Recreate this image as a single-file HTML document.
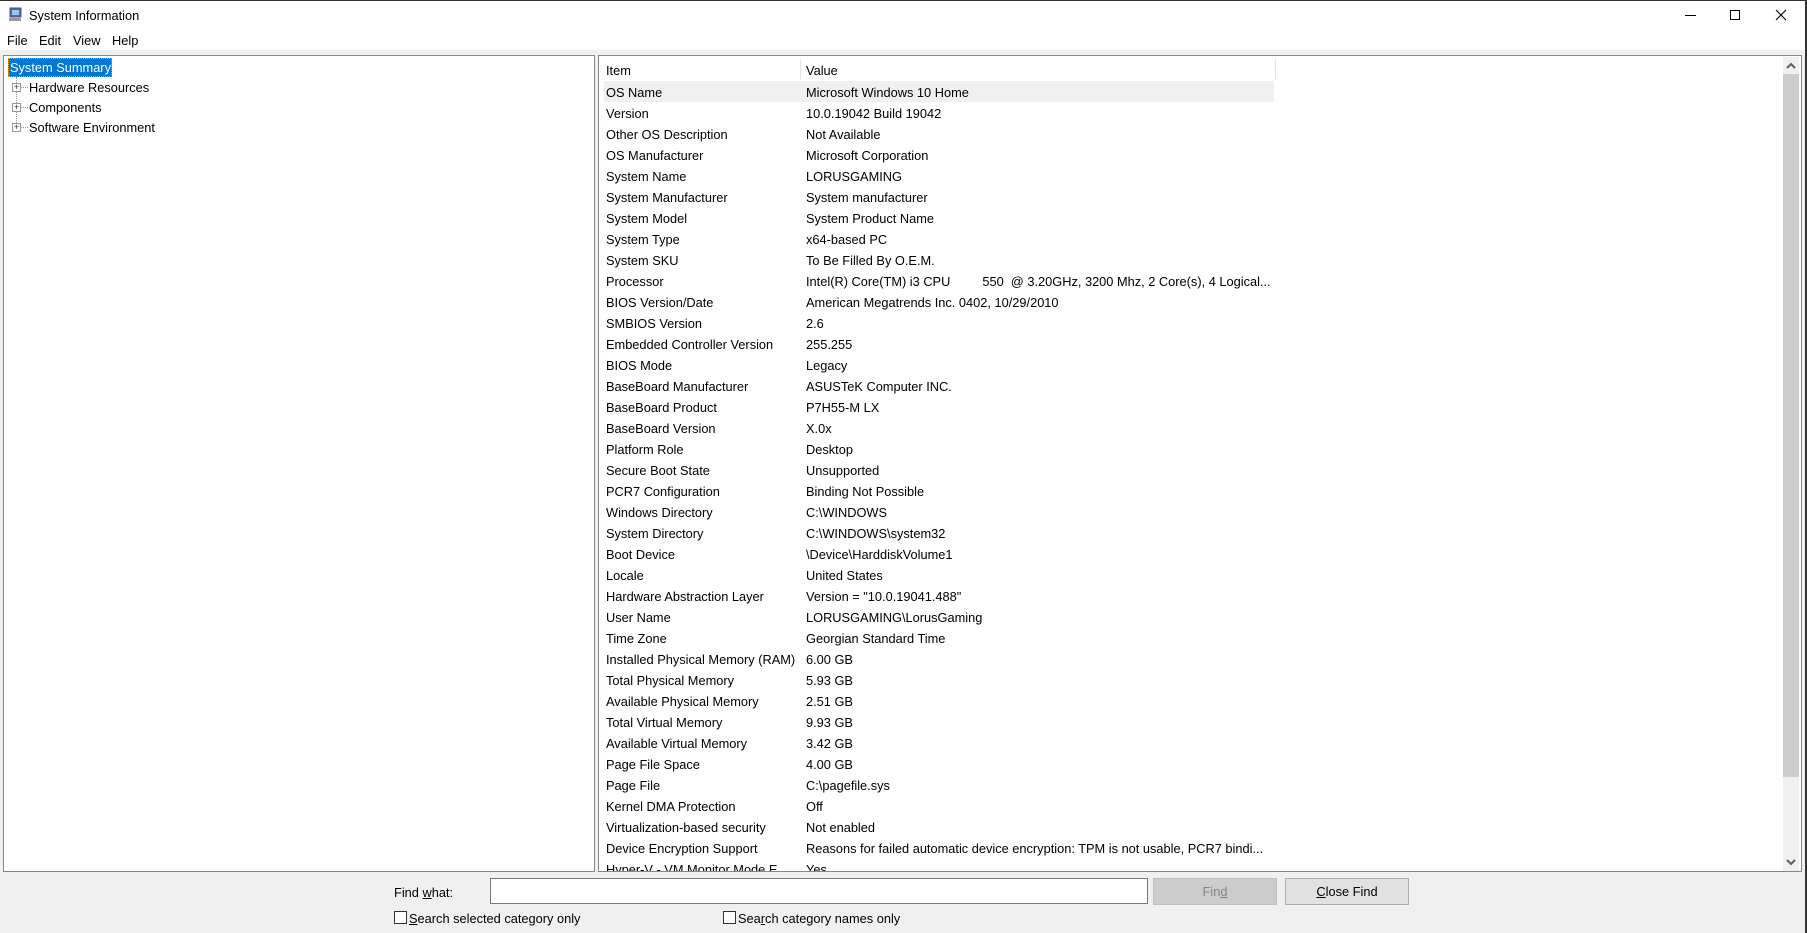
<!DOCTYPE html>
<html><head><meta charset="utf-8"><style>
*{margin:0;padding:0;box-sizing:border-box}
body{width:1807px;height:933px;background:#fff;font-family:"Liberation Sans",sans-serif;font-size:12.8px;color:#000;position:relative;overflow:hidden}
.a{position:absolute;white-space:nowrap}
.row{position:absolute;left:604px;height:21px;width:670px}
.row span{position:absolute;top:4px}
.row .k{left:2px}.row .v{left:202px}
</style></head><body>
<div class="a" style="left:0;top:0;width:1807px;height:1px;background:#333"></div>
<div class="a" style="left:1805px;top:0;width:2px;height:933px;background:#333"></div>
<svg class="a" style="left:8px;top:7px" width="16" height="16" viewBox="0 0 16 16"><rect x="2" y="1" width="11" height="9" fill="#3a6fc4" stroke="#556" stroke-width="1"/><rect x="4" y="3" width="7" height="5" fill="#9cc3ee"/><rect x="1" y="11" width="12" height="3" fill="#999"/></svg>
<div class="a" style="left:29px;top:8px">System Information</div>
<div class="a" style="left:1685px;top:15px;width:11px;height:1px;background:#000"></div>
<div class="a" style="left:1730px;top:10px;width:10px;height:10px;border:1px solid #000"></div>
<svg class="a" style="left:1775px;top:9px" width="12" height="12"><path d="M1 1L11 11M11 1L1 11" stroke="#000" stroke-width="1.1"/></svg>
<div class="a" style="left:7px;top:33px">File</div>
<div class="a" style="left:39px;top:33px">Edit</div>
<div class="a" style="left:73px;top:33px">View</div>
<div class="a" style="left:112px;top:33px">Help</div>
<div class="a" style="left:0;top:50px;width:1805px;height:883px;background:#f0f0f0"></div>
<div class="a" style="left:3px;top:55px;width:592px;height:817px;background:#fff;border:1px solid #828790"></div>
<div class="a" style="left:8px;top:58px;width:104px;height:19px;background:#0078d7;border:1px dotted #f0a020"></div>
<div class="a" style="left:10px;top:60px;color:#fff">System Summary</div>
<div class="a" style="left:16px;top:77px;height:52px;border-left:1px dotted #999"></div>
<div class="a" style="left:20px;top:87px;width:8px;border-top:1px dotted #999"></div>
<div class="a" style="left:20px;top:107px;width:8px;border-top:1px dotted #999"></div>
<div class="a" style="left:20px;top:127px;width:8px;border-top:1px dotted #999"></div>
<div class="a" style="left:12px;top:83px;width:9px;height:9px;border:1px solid #999;background:#fff;font-size:9px;line-height:7px;text-align:center;color:#333">+</div>
<div class="a" style="left:12px;top:103px;width:9px;height:9px;border:1px solid #999;background:#fff;font-size:9px;line-height:7px;text-align:center;color:#333">+</div>
<div class="a" style="left:12px;top:123px;width:9px;height:9px;border:1px solid #999;background:#fff;font-size:9px;line-height:7px;text-align:center;color:#333">+</div>
<div class="a" style="left:29px;top:80px">Hardware Resources</div>
<div class="a" style="left:29px;top:100px">Components</div>
<div class="a" style="left:29px;top:120px">Software Environment</div>
<div class="a" style="left:598px;top:55px;width:1204px;height:817px;background:#fff;border:1px solid #828790;overflow:hidden">
<div class="a" style="left:201px;top:3px;width:1px;height:20px;background:#e5e5e5"></div>
<div class="a" style="left:676px;top:3px;width:1px;height:20px;background:#e5e5e5"></div>
<div class="a" style="left:7px;top:7px">Item</div>
<div class="a" style="left:207px;top:7px">Value</div>
</div>
<div class="a" style="left:1783px;top:57px;width:16px;height:814px;background:#f0f0f0"></div>
<div class="a" style="left:1783px;top:74px;width:16px;height:703px;background:#cdcdcd"></div>
<svg class="a" style="left:1786px;top:62px" width="10" height="8"><path d="M1 6L5 2L9 6" stroke="#606060" stroke-width="2" fill="none"/></svg>
<svg class="a" style="left:1786px;top:858px" width="10" height="8"><path d="M1 2L5 6L9 2" stroke="#606060" stroke-width="2" fill="none"/></svg>
<div class="a" style="left:604px;top:81px;width:670px;height:21px;background:#f0f0f0"></div>
<div class="a" style="left:599px;top:56px;width:1183px;height:815px;overflow:hidden">
<div style="position:absolute;left:-599px;top:-56px;width:1300px;height:900px">
<div class="row" style="top:81px"><span class="k">OS Name</span><span class="v">Microsoft Windows 10 Home</span></div>
<div class="row" style="top:102px"><span class="k">Version</span><span class="v">10.0.19042 Build 19042</span></div>
<div class="row" style="top:123px"><span class="k">Other OS Description</span><span class="v">Not Available</span></div>
<div class="row" style="top:144px"><span class="k">OS Manufacturer</span><span class="v">Microsoft Corporation</span></div>
<div class="row" style="top:165px"><span class="k">System Name</span><span class="v">LORUSGAMING</span></div>
<div class="row" style="top:186px"><span class="k">System Manufacturer</span><span class="v">System manufacturer</span></div>
<div class="row" style="top:207px"><span class="k">System Model</span><span class="v">System Product Name</span></div>
<div class="row" style="top:228px"><span class="k">System Type</span><span class="v">x64-based PC</span></div>
<div class="row" style="top:249px"><span class="k">System SKU</span><span class="v">To Be Filled By O.E.M.</span></div>
<div class="row" style="top:270px"><span class="k">Processor</span><span class="v" style="white-space:pre">Intel(R) Core(TM) i3 CPU         550  @ 3.20GHz, 3200 Mhz, 2 Core(s), 4 Logical...</span></div>
<div class="row" style="top:291px"><span class="k">BIOS Version/Date</span><span class="v">American Megatrends Inc. 0402, 10/29/2010</span></div>
<div class="row" style="top:312px"><span class="k">SMBIOS Version</span><span class="v">2.6</span></div>
<div class="row" style="top:333px"><span class="k">Embedded Controller Version</span><span class="v">255.255</span></div>
<div class="row" style="top:354px"><span class="k">BIOS Mode</span><span class="v">Legacy</span></div>
<div class="row" style="top:375px"><span class="k">BaseBoard Manufacturer</span><span class="v">ASUSTeK Computer INC.</span></div>
<div class="row" style="top:396px"><span class="k">BaseBoard Product</span><span class="v">P7H55-M LX</span></div>
<div class="row" style="top:417px"><span class="k">BaseBoard Version</span><span class="v">X.0x</span></div>
<div class="row" style="top:438px"><span class="k">Platform Role</span><span class="v">Desktop</span></div>
<div class="row" style="top:459px"><span class="k">Secure Boot State</span><span class="v">Unsupported</span></div>
<div class="row" style="top:480px"><span class="k">PCR7 Configuration</span><span class="v">Binding Not Possible</span></div>
<div class="row" style="top:501px"><span class="k">Windows Directory</span><span class="v">C:\WINDOWS</span></div>
<div class="row" style="top:522px"><span class="k">System Directory</span><span class="v">C:\WINDOWS\system32</span></div>
<div class="row" style="top:543px"><span class="k">Boot Device</span><span class="v">\Device\HarddiskVolume1</span></div>
<div class="row" style="top:564px"><span class="k">Locale</span><span class="v">United States</span></div>
<div class="row" style="top:585px"><span class="k">Hardware Abstraction Layer</span><span class="v">Version = "10.0.19041.488"</span></div>
<div class="row" style="top:606px"><span class="k">User Name</span><span class="v">LORUSGAMING\LorusGaming</span></div>
<div class="row" style="top:627px"><span class="k">Time Zone</span><span class="v">Georgian Standard Time</span></div>
<div class="row" style="top:648px"><span class="k">Installed Physical Memory (RAM)</span><span class="v">6.00 GB</span></div>
<div class="row" style="top:669px"><span class="k">Total Physical Memory</span><span class="v">5.93 GB</span></div>
<div class="row" style="top:690px"><span class="k">Available Physical Memory</span><span class="v">2.51 GB</span></div>
<div class="row" style="top:711px"><span class="k">Total Virtual Memory</span><span class="v">9.93 GB</span></div>
<div class="row" style="top:732px"><span class="k">Available Virtual Memory</span><span class="v">3.42 GB</span></div>
<div class="row" style="top:753px"><span class="k">Page File Space</span><span class="v">4.00 GB</span></div>
<div class="row" style="top:774px"><span class="k">Page File</span><span class="v">C:\pagefile.sys</span></div>
<div class="row" style="top:795px"><span class="k">Kernel DMA Protection</span><span class="v">Off</span></div>
<div class="row" style="top:816px"><span class="k">Virtualization-based security</span><span class="v">Not enabled</span></div>
<div class="row" style="top:837px"><span class="k">Device Encryption Support</span><span class="v">Reasons for failed automatic device encryption: TPM is not usable, PCR7 bindi...</span></div>
<div class="row" style="top:858px"><span class="k">Hyper-V - VM Monitor Mode E...</span><span class="v">Yes</span></div>
</div></div>
<div class="a" style="left:394px;top:885px">Find <u>w</u>hat:</div>
<div class="a" style="left:490px;top:878px;width:658px;height:26px;background:#fff;border:1px solid #7a7a7a"></div>
<div class="a" style="left:1153px;top:878px;width:124px;height:27px;background:#cccccc;border:1px solid #bfbfbf;color:#838383;text-align:center;line-height:25px">Fin<u>d</u></div>
<div class="a" style="left:1285px;top:878px;width:124px;height:27px;background:#e1e1e1;border:1px solid #adadad;text-align:center;line-height:25px"><u>C</u>lose Find</div>
<div class="a" style="left:394px;top:911px;width:13px;height:13px;border:1px solid #333;background:#fff"></div>
<div class="a" style="left:409px;top:911px"><u>S</u>earch selected category only</div>
<div class="a" style="left:723px;top:911px;width:13px;height:13px;border:1px solid #333;background:#fff"></div>
<div class="a" style="left:738px;top:911px">Sea<u>r</u>ch category names only</div>
</body></html>
